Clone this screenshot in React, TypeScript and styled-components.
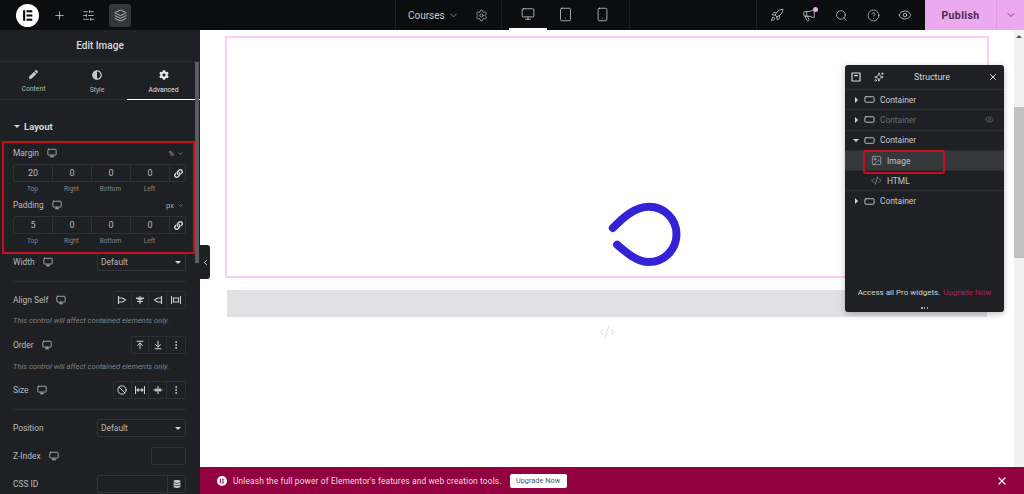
import React from 'react';
import styled, { createGlobalStyle } from 'styled-components';
import {
  Plus, SlidersHorizontal, Layers, Settings, Monitor, Tablet, Smartphone, ChevronDown, ChevronLeft,
  Rocket, Megaphone, Search, CircleHelp, Eye, ArrowUpToLine, ArrowDownToLine, MoreVertical, Ban,
  Sparkles, X, Image as ImageIcon, CodeXml, RectangleHorizontal,
} from 'lucide-react';
import { FaPen, FaCog, FaLink, FaDatabase, FaAdjust } from 'react-icons/fa';

const GlobalStyle = createGlobalStyle`
  html, body { margin: 0; padding: 0; height: 100%; overflow: hidden; background: #fff; }
  #root { height: 494px; }
  * { box-sizing: border-box; }
  body { font-family: Roboto, "Liberation Sans", sans-serif; }
`;

const Page = styled.div`
  width: 1024px;
  height: 494px;
  display: flex;
  flex-direction: column;
  overflow: hidden;
  position: relative;
`;

/* top bar */
const TopBar = styled.header`
  height: 30px;
  flex: none;
  background: #0c0d0e;
  display: flex;
  color: #d5d8dc;
`;
const LeftTools = styled.div`
  width: 395px;
  display: flex;
  align-items: center;
  padding-left: 16px;
`;
const LogoMark = styled.svg`
  width: 23px;
  height: 23px;
  margin-right: 12px;
  flex: none;
`;
const ToolIcon = styled.span<{ $w?: number; $active?: boolean }>`
  width: ${p => p.$w ?? 30}px;
  height: 23px;
  display: flex;
  align-items: center;
  justify-content: center;
  border-radius: 3px;
  background: ${p => (p.$active ? '#343638' : 'transparent')};
  position: relative;
  flex: none;
`;
const DocSection = styled.div`
  width: 106px;
  display: flex;
  align-items: center;
  padding-left: 12px;
  border-left: 1px solid #1d1e20;
  font-size: 10px;
  color: #c6c8cc;
`;
const DocName = styled.span`
  width: 35px;
`;
const DeviceSection = styled.div`
  width: 128px;
  display: flex;
  align-items: center;
  padding-left: 7px;
  border-left: 1px solid #1d1e20;
`;
const DeviceTab = styled.span<{ $active?: boolean }>`
  width: 37.5px;
  height: 30px;
  display: flex;
  align-items: center;
  justify-content: center;
  border-bottom: 2px solid ${p => (p.$active ? '#fff' : 'transparent')};
`;
const BlankSection = styled.div`
  width: 128px;
  border-left: 1px solid #1d1e20;
  border-right: 1px solid #1d1e20;
`;
const ActionSection = styled.div`
  width: 168px;
  display: flex;
  align-items: center;
  padding-left: 4px;
`;
const Dot = styled.i`
  position: absolute;
  width: 5px;
  height: 5px;
  border-radius: 50%;
  background: #e9a6ee;
  top: 3px;
  right: 7px;
`;
const Publish = styled.div`
  width: 99px;
  flex: none;
  display: flex;
  background: #eba9ef;
  color: #4c2a52;
  font-size: 10.5px;
  font-weight: 700;
  letter-spacing: 0.4px;
`;
const PublishLabel = styled.span`
  width: 72px;
  display: flex;
  align-items: center;
  justify-content: center;
  border-right: 1px solid #dd9ae2;
`;
const PublishCaret = styled.span`
  flex: 1;
  display: flex;
  align-items: center;
  justify-content: center;
`;

/* body */
const Body = styled.div`
  flex: 1;
  display: flex;
  min-height: 0;
`;

/* sidebar */
const Sidebar = styled.aside`
  width: 200px;
  flex: none;
  background: #1f2024;
  color: #c2c4c8;
  position: relative;
  overflow: hidden;
`;
const SideScroll = styled.i`
  position: absolute;
  right: 1px;
  top: 32px;
  width: 4px;
  height: 201px;
  background: #5b5c5f;
`;
const SideTitle = styled.div`
  height: 32px;
  display: flex;
  align-items: center;
  justify-content: center;
  font-size: 10px;
  font-weight: 500;
  color: #d8dade;
  border-bottom: 1px solid #2a2b2f;
`;
const TabRow = styled.div`
  height: 38px;
  display: flex;
  border-bottom: 1px solid #2f3034;
`;
const Tab = styled.div<{ $active?: boolean; $w: number }>`
  width: ${p => p.$w}px;
  display: flex;
  flex-direction: column;
  align-items: center;
  padding-top: 8px;
  gap: 6px;
  font-size: 6.8px;
  color: ${p => (p.$active ? '#e2e3e6' : '#b4b6ba')};
  border-bottom: ${p => (p.$active ? '1px solid #fff' : '0')};
  margin-bottom: -1px;
`;
const SectionHead = styled.div`
  height: 46px;
  padding: 21px 0 0 14px;
  display: flex;
  align-items: flex-start;
  gap: 4px;
  font-size: 9.5px;
  font-weight: 700;
  color: #d4d6da;
`;
const Caret = styled.i<{ $dir: 'down' | 'right'; $dim?: boolean }>`
  width: 0;
  height: 0;
  flex: none;
  border-style: solid;
  ${p =>
    p.$dir === 'down'
      ? `border-width: 3px 3px 0 3px; border-color: ${p.$dim ? '#9a9ca0' : '#d4d6da'} transparent transparent transparent;`
      : `border-width: 3px 0 3px 3px; margin: 0 1.5px; border-color: transparent transparent transparent ${p.$dim ? '#9a9ca0' : '#d4d6da'};`}
`;
const HeadCaret = styled(Caret)`
  margin-top: 4px;
`;
const Controls = styled.div`
  padding: 0 14px 0 13px;
`;
const DimHead = styled.div`
  height: 18px;
  padding-bottom: 4px;
  display: flex;
  align-items: center;
  gap: 8px;
  font-size: 8.4px;
  color: #b8babd;
`;
const Unit = styled.span`
  margin-left: auto;
  font-size: 7.5px;
  color: #a4a6aa;
  display: flex;
  align-items: center;
  gap: 3px;
  padding-right: 2px;
`;
const DimGrid = styled.div`
  display: grid;
  grid-template-columns: repeat(4, 39px) 17px;
  height: 18px;
  border: 1px solid #303136;
  border-radius: 2px;
`;
const DimCell = styled.div`
  display: flex;
  align-items: center;
  justify-content: center;
  font-size: 9px;
  color: #b8babd;
  border-right: 1px solid #303136;
  &:last-child { border-right: 0; }
`;
const DimLabels = styled.div`
  display: grid;
  grid-template-columns: repeat(4, 39px);
  height: 13px;
  margin-bottom: 3px;
  align-items: center;
  font-size: 6.5px;
  color: #85878b;
  text-align: center;
`;
const Row = styled.div<{ $h: number }>`
  height: ${p => p.$h}px;
  display: flex;
  align-items: center;
  gap: 8px;
  font-size: 8.4px;
  color: #b8babd;
`;
const FieldBox = styled.div<{ $w: number }>`
  margin-left: auto;
  width: ${p => p.$w}px;
  height: 18px;
  border: 1px solid #333439;
  border-radius: 2px;
  display: flex;
  align-items: center;
  justify-content: space-between;
  padding-left: 3px;
  padding-right: 4px;
  color: #b8babd;
  font-size: 8.4px;
`;
const FieldAddon = styled.span`
  width: 18px;
  height: 16px;
  margin-right: -4px;
  display: flex;
  align-items: center;
  justify-content: center;
  border-left: 1px solid #333439;
`;
const Divider = styled.div<{ $mt?: number; $mb?: number }>`
  height: 1px;
  background: #2c2d31;
  margin-top: ${p => p.$mt ?? 0}px;
  margin-bottom: ${p => p.$mb ?? 0}px;
`;
const BtnGroup = styled.div`
  margin-left: auto;
  display: flex;
  border: 1px solid #2e2f33;
  border-radius: 2px;
  height: 18px;
`;
const GroupBtn = styled.span`
  width: 17.8px;
  display: flex;
  align-items: center;
  justify-content: center;
  border-right: 1px solid #2e2f33;
  &:last-child { border-right: 0; }
`;
const Note = styled.div`
  height: 14px;
  font-size: 7.6px;
  font-style: italic;
  color: #7f8185;
  white-space: nowrap;
  padding-top: 1px;
`;

/* canvas */
const Main = styled.main`
  flex: 1;
  min-width: 0;
  display: flex;
  flex-direction: column;
  position: relative;
`;
const CanvasWrap = styled.div`
  flex: 1;
  min-height: 0;
  display: flex;
`;
const Canvas = styled.div`
  flex: 1;
  padding: 6px 0 0 25px;
`;
const Selected = styled.div`
  width: 764px;
  height: 242px;
  border: 2px solid #f6d0f8;
  padding: 162px 0 0 380px;
`;
const Empty = styled.div`
  width: 760px;
  height: 27px;
  margin: 12px 0 0 2px;
  background: #e1e1e3;
`;
const CodeHint = styled.div`
  width: 760px;
  margin-left: 2px;
  padding-top: 7px;
  display: flex;
  justify-content: center;
`;
const PageScroll = styled.div`
  width: 10px;
  flex: none;
  background: #f1f1f1;
  display: flex;
  flex-direction: column;
`;
const ScrollArrow = styled.i`
  display: block;
  width: 0;
  height: 0;
  margin: 5px auto 0;
  border-style: solid;
  border-width: 0 3px 3px 3px;
  border-color: transparent transparent #555 transparent;
`;
const ScrollThumb = styled.i`
  display: block;
  height: 151px;
  margin-top: 69px;
  background: #c1c1c1;
`;
const Handle = styled.div`
  position: absolute;
  left: 0;
  top: 215px;
  width: 10px;
  height: 34px;
  background: #1f2024;
  display: flex;
  align-items: center;
  justify-content: center;
  border-radius: 0 3px 3px 0;
  color: #e6e6e6;
`;

/* structure panel */
const Panel = styled.section`
  position: absolute;
  left: 645px;
  top: 35px;
  width: 159px;
  height: 247px;
  background: #1f2024;
  border-radius: 3px;
  box-shadow: 0 2px 6px rgba(0, 0, 0, 0.25);
  color: #c2c4c8;
  display: flex;
  flex-direction: column;
`;
const PanelHead = styled.div`
  height: 24px;
  flex: none;
  display: flex;
  align-items: center;
  padding: 0 6px;
  gap: 13px;
  font-size: 8.8px;
  color: #d4d6da;
`;
const PanelTitle = styled.span`
  flex: 1;
  text-align: center;
  padding-right: 8px;
`;
const TreeRow = styled.div<{ $indent?: number; $active?: boolean; $dim?: boolean }>`
  height: 20.3px;
  flex: none;
  display: flex;
  align-items: center;
  gap: 5px;
  padding-left: ${p => p.$indent ?? 8}px;
  padding-right: 10px;
  font-size: 8.4px;
  border-top: 1px solid #2c2d31;
  background: ${p => (p.$active ? '#35373a' : 'transparent')};
  color: ${p => (p.$dim ? '#6a6c70' : '#c6c8cc')};
`;
const TreeEnd = styled.span`
  margin-left: auto;
  display: flex;
`;
const Highlight = styled.i`
  position: absolute;
  left: 18px;
  top: 85px;
  width: 82px;
  height: 24px;
  border: 2px solid #c4101c;
  border-radius: 2px;
`;
const PanelFoot = styled.div`
  margin-top: auto;
  padding-bottom: 15px;
  text-align: center;
  font-size: 8px;
  color: #d2d4d8;
  white-space: nowrap;
`;
const FootLink = styled.span`
  color: #b01b6b;
  margin-left: 3px;
`;
const Grip = styled.i`
  position: absolute;
  bottom: 3px;
  left: 76px;
  width: 7px;
  height: 2px;
  background: repeating-linear-gradient(90deg, #a8aaae 0 1.5px, transparent 1.5px 2.75px);
`;
const RedBox = styled.i`
  position: absolute;
  left: 2px;
  top: 111px;
  width: 193px;
  height: 113px;
  border: 2px solid #c4101c;
  pointer-events: none;
`;

/* banner */
const Banner = styled.div`
  height: 27px;
  flex: none;
  background: #93003f;
  color: #f1dbe4;
  display: flex;
  align-items: center;
  padding-left: 17px;
  font-size: 8.4px;
  letter-spacing: 0.13px;
`;
const BannerLogo = styled.svg`
  width: 10px;
  height: 10px;
  margin-right: 6px;
`;
const UpgradeBtn = styled.span`
  width: 57px;
  height: 14px;
  margin-left: 8px;
  background: #fff;
  color: #55585c;
  border-radius: 2px;
  font-size: 7.4px;
  letter-spacing: 0;
  display: flex;
  align-items: center;
  justify-content: center;
`;
const BannerClose = styled.span`
  margin-left: auto;
  margin-right: 16px;
  display: flex;
  color: #fff;
`;

const Logo = ({ fg }: { fg: string }) => (
  <>
    <circle cx="12" cy="12" r="12" fill="#fff" />
    <rect x="7.4" y="6.5" width="2.2" height="11" fill={fg} />
    <rect x="11" y="6.5" width="6" height="2.2" fill={fg} />
    <rect x="11" y="10.9" width="6" height="2.2" fill={fg} />
    <rect x="11" y="15.3" width="6" height="2.2" fill={fg} />
  </>
);

const glyphs: Record<string, string> = {
  start: 'M1.5 1v8M1.5 3h4l3 2-3 2h-4',
  center: 'M5 1v8M1 3h8L5 5 1 3zM2 6.5h6',
  end: 'M8.5 1v8M8.5 3h-4l-3 2 3 2h4',
  stretch: 'M.5 1v8M9.5 1v8M2.5 3h5v4h-5z',
  grow: 'M.5 1v8M9.5 1v8M2 5h6M3.5 3.5 2 5l1.5 1.5M6.5 3.5 8 5 6.5 6.5',
  shrink: 'M5 1v8M.5 5h3M2.5 3.5 4 5 2.5 6.5M9.5 5h-3M7.5 3.5 6 5l1.5 1.5',
};

const Glyph = ({ name }: { name: string }) => (
  <svg width="10" height="10" viewBox="0 0 10 10" fill="none" stroke="#d0d2d6" strokeWidth="1.1">
    <path d={glyphs[name]} />
  </svg>
);

const Dev = () => <Monitor size={10} color="#b8babd" />;
const iconGrey = '#d0d2d6';

const Dimensions = ({ name, unit, top }: { name: string; unit: string; top: string }) => (
  <>
    <DimHead>
      {name} <Dev />
      <Unit>
        {unit} <ChevronDown size={7} />
      </Unit>
    </DimHead>
    <DimGrid>
      <DimCell>{top}</DimCell>
      <DimCell>0</DimCell>
      <DimCell>0</DimCell>
      <DimCell>0</DimCell>
      <DimCell>
        <FaLink size={9} color="#d8dade" />
      </DimCell>
    </DimGrid>
    <DimLabels>
      <span>Top</span>
      <span>Right</span>
      <span>Bottom</span>
      <span>Left</span>
    </DimLabels>
  </>
);

const Select = ({ w }: { w: number }) => (
  <FieldBox $w={w}>
    Default <Caret $dir="down" />
  </FieldBox>
);

const Container = ({ dim, open }: { dim?: boolean; open?: boolean }) => (
  <TreeRow $dim={dim}>
    <Caret $dir={open ? 'down' : 'right'} />
    <RectangleHorizontal size={11} color="#c6c8cc" />
    <span>Container</span>
    {dim && (
      <TreeEnd>
        <Eye size={9} color="#66686c" />
      </TreeEnd>
    )}
  </TreeRow>
);

export default function App() {
  return (
    <Page>
      <GlobalStyle />
      <TopBar>
        <LeftTools>
          <LogoMark viewBox="0 0 24 24">
            <Logo fg="#0c0d0e" />
          </LogoMark>
          <ToolIcon $w={16}>
            <Plus size={13} strokeWidth={1.4} />
          </ToolIcon>
          <ToolIcon $w={42}>
            <SlidersHorizontal size={13} strokeWidth={1.4} />
          </ToolIcon>
          <ToolIcon $w={22} $active>
            <Layers size={13} strokeWidth={1.4} />
          </ToolIcon>
        </LeftTools>
        <DocSection>
          <DocName>Courses</DocName>
          <ToolIcon $w={20}>
            <ChevronDown size={11} strokeWidth={1.4} />
          </ToolIcon>
          <ToolIcon $w={36}>
            <Settings size={13} strokeWidth={1.3} />
          </ToolIcon>
        </DocSection>
        <DeviceSection>
          <DeviceTab $active>
            <Monitor size={14} strokeWidth={1.3} />
          </DeviceTab>
          <DeviceTab>
            <Tablet size={15} strokeWidth={1.2} />
          </DeviceTab>
          <DeviceTab>
            <Smartphone size={15} strokeWidth={1.2} />
          </DeviceTab>
        </DeviceSection>
        <BlankSection />
        <ActionSection>
          <ToolIcon $w={32}>
            <Rocket size={14} strokeWidth={1.3} />
          </ToolIcon>
          <ToolIcon $w={32}>
            <Megaphone size={14} strokeWidth={1.3} />
            <Dot />
          </ToolIcon>
          <ToolIcon $w={32}>
            <Search size={13} strokeWidth={1.3} />
          </ToolIcon>
          <ToolIcon $w={32}>
            <CircleHelp size={13} strokeWidth={1.3} />
          </ToolIcon>
          <ToolIcon $w={32}>
            <Eye size={14} strokeWidth={1.3} />
          </ToolIcon>
        </ActionSection>
        <Publish>
          <PublishLabel>Publish</PublishLabel>
          <PublishCaret>
            <ChevronDown size={12} strokeWidth={1.5} />
          </PublishCaret>
        </Publish>
      </TopBar>
      <Body>
        <Sidebar>
          <SideScroll />
          <SideTitle>Edit Image</SideTitle>
          <TabRow>
            <Tab $w={67}>
              <FaPen size={9} color="#c6c8cc" />
              Content
            </Tab>
            <Tab $w={60}>
              <FaAdjust size={10} color="#c6c8cc" />
              Style
            </Tab>
            <Tab $w={73} $active>
              <FaCog size={10} color="#e8e9eb" />
              Advanced
            </Tab>
          </TabRow>
          <SectionHead>
            <HeadCaret $dir="down" />
            Layout
          </SectionHead>
          <Controls>
            <Dimensions name="Margin" unit="%" top="20" />
            <Dimensions name="Padding" unit="px" top="5" />
            <Row $h={24}>
              Width <Dev />
              <Select w={89} />
            </Row>
            <Divider $mt={7} $mb={3} />
            <Row $h={30}>
              Align Self <Dev />
              <BtnGroup>
                <GroupBtn><Glyph name="start" /></GroupBtn>
                <GroupBtn><Glyph name="center" /></GroupBtn>
                <GroupBtn><Glyph name="end" /></GroupBtn>
                <GroupBtn><Glyph name="stretch" /></GroupBtn>
              </BtnGroup>
            </Row>
            <Note>This control will affect contained elements only.</Note>
            <Row $h={32}>
              Order <Dev />
              <BtnGroup>
                <GroupBtn><ArrowUpToLine size={10} strokeWidth={2.4} color={iconGrey} /></GroupBtn>
                <GroupBtn><ArrowDownToLine size={10} strokeWidth={2.4} color={iconGrey} /></GroupBtn>
                <GroupBtn><MoreVertical size={10} strokeWidth={2.4} color={iconGrey} /></GroupBtn>
              </BtnGroup>
            </Row>
            <Note>This control will affect contained elements only.</Note>
            <Row $h={30}>
              Size <Dev />
              <BtnGroup>
                <GroupBtn><Ban size={10} strokeWidth={2.4} color={iconGrey} /></GroupBtn>
                <GroupBtn><Glyph name="grow" /></GroupBtn>
                <GroupBtn><Glyph name="shrink" /></GroupBtn>
                <GroupBtn><MoreVertical size={10} strokeWidth={2.4} color={iconGrey} /></GroupBtn>
              </BtnGroup>
            </Row>
            <Divider $mt={4} />
            <Row $h={36}>
              Position
              <Select w={89} />
            </Row>
            <Row $h={20}>
              Z-Index <Dev />
              <FieldBox $w={35} />
            </Row>
            <Row $h={36}>
              CSS ID
              <FieldBox $w={89}>
                <span />
                <FieldAddon>
                  <FaDatabase size={8} color="#c6c8cc" />
                </FieldAddon>
              </FieldBox>
            </Row>
          </Controls>
          <RedBox />
        </Sidebar>
        <Main>
          <CanvasWrap>
            <Canvas>
              <Selected>
                <svg width="77" height="70" viewBox="140 30 230 210" fill="none">
                  <path
                    d="M157 114C190 80 225 50 265 50C311 50 348 87 348 133C348 179 311 216 265 216C230 216 200 190 170 164"
                    stroke="#3422d6"
                    strokeWidth="24"
                    strokeLinecap="round"
                  />
                </svg>
              </Selected>
              <Empty />
              <CodeHint>
                <CodeXml size={16} strokeWidth={1} color="#c9cacc" />
              </CodeHint>
            </Canvas>
            <PageScroll>
              <ScrollArrow />
              <ScrollThumb />
            </PageScroll>
          </CanvasWrap>
          <Banner>
            <BannerLogo viewBox="0 0 24 24">
              <Logo fg="#93003f" />
            </BannerLogo>
            Unleash the full power of Elementor's features and web creation tools.
            <UpgradeBtn>Upgrade Now</UpgradeBtn>
            <BannerClose>
              <X size={12} strokeWidth={2.4} />
            </BannerClose>
          </Banner>
          <Handle>
            <ChevronLeft size={9} strokeWidth={2.4} />
          </Handle>
          <Panel>
            <PanelHead>
              <svg width="10" height="10" viewBox="0 0 10 10" fill="none" stroke="#d4d6da" strokeWidth="1.2">
                <path d="M1 1h8v8H1zM3 3.6h4" />
              </svg>
              <Sparkles size={10} color="#d4d6da" />
              <PanelTitle>Structure</PanelTitle>
              <X size={10} strokeWidth={2.4} color="#d4d6da" />
            </PanelHead>
            <Container />
            <Container dim />
            <Container open />
            <TreeRow $indent={26} $active>
              <ImageIcon size={11} color="#c6c8cc" strokeWidth={1.3} />
              <span>Image</span>
            </TreeRow>
            <TreeRow $indent={26}>
              <CodeXml size={11} color="#c6c8cc" strokeWidth={1.3} />
              <span>HTML</span>
            </TreeRow>
            <Container />
            <Highlight />
            <PanelFoot>
              Access all Pro widgets.<FootLink>Upgrade Now</FootLink>
            </PanelFoot>
            <Grip />
          </Panel>
        </Main>
      </Body>
    </Page>
  );
}
